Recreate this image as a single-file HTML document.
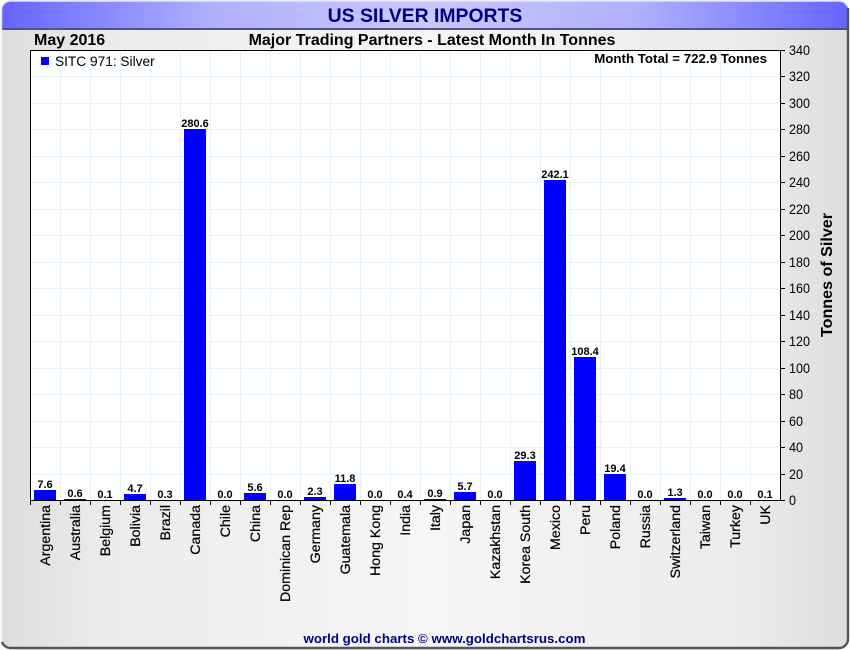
<!DOCTYPE html>
<html><head><meta charset="utf-8"><style>
html,body{margin:0;padding:0;background:#fff;width:850px;height:650px;overflow:hidden}
svg{display:block}
text{font-family:"Liberation Sans",sans-serif;fill:#000}
.v{font-size:11px;font-weight:bold;text-anchor:middle}
.y{font-size:14px}
.c{font-size:14.2px;text-anchor:end;stroke:#000;stroke-width:.22px}
</style></head><body>
<svg width="850" height="650" viewBox="0 0 850 650" xmlns="http://www.w3.org/2000/svg">
<defs>
<linearGradient id="bg" x1="0" x2="1" y1="0" y2="0"><stop offset="0" stop-color="#dddddd"/><stop offset=".12" stop-color="#ebebeb"/><stop offset=".5" stop-color="#f6f6f6"/><stop offset=".88" stop-color="#ebebeb"/><stop offset="1" stop-color="#dddddd"/></linearGradient>
<linearGradient id="tb" x1="0" x2="1" y1="0" y2="0"><stop offset="0" stop-color="#6464ff"/><stop offset=".25" stop-color="#b0b0ff"/><stop offset=".5" stop-color="#c8c8ff"/><stop offset=".75" stop-color="#b0b0ff"/><stop offset="1" stop-color="#6464ff"/></linearGradient>
<clipPath id="fr"><rect x="1" y="1" width="847" height="647" rx="9"/></clipPath>
</defs>
<rect x="1" y="1" width="847" height="647" rx="9" fill="url(#bg)"/>
<g clip-path="url(#fr)"><rect x="0" y="0" width="850" height="29" fill="url(#tb)"/><rect x="0" y="28" width="850" height="2" fill="#50508c"/></g>
<path d="M1.5 30V10A9 9 0 0 1 10.5 1H840A8 8 0 0 1 847 6" fill="none" stroke="#e4e4fa" stroke-width="1.5"/>
<path d="M1.5 30V640" fill="none" stroke="#f0f0f0" stroke-width="1.5"/>
<path d="M848 8V639A9 9 0 0 1 839 648H10A9 9 0 0 1 2 642" fill="none" stroke="#555" stroke-width="2.4"/>
<text x="425" y="22" font-size="19.4" font-weight="bold" text-anchor="middle" style="fill:#000080">US SILVER IMPORTS</text>
<text x="34" y="45" font-size="16" font-weight="bold">May 2016</text>
<text x="432" y="45" font-size="16" font-weight="bold" text-anchor="middle">Major Trading Partners - Latest Month In Tonnes</text>
<rect x="30.5" y="50.5" width="750" height="450" fill="#fff"/>
<path stroke="#e6f2fa" fill="none" d="M60.5 51V500M90.5 51V500M120.5 51V500M150.5 51V500M180.5 51V500M210.5 51V500M240.5 51V500M270.5 51V500M300.5 51V500M330.5 51V500M360.5 51V500M390.5 51V500M420.5 51V500M450.5 51V500M480.5 51V500M510.5 51V500M540.5 51V500M570.5 51V500M600.5 51V500M630.5 51V500M660.5 51V500M690.5 51V500M720.5 51V500M750.5 51V500M31 474.5H780M31 447.5H780M31 421.5H780M31 394.5H780M31 368.5H780M31 341.5H780M31 315.5H780M31 288.5H780M31 262.5H780M31 235.5H780M31 209.5H780M31 182.5H780M31 156.5H780M31 129.5H780M31 103.5H780M31 76.5H780"/>
<g fill="#0000ff">
<rect x="34" y="490" width="22" height="10"/>
<rect x="64" y="499" width="22" height="1"/>
<rect x="124" y="494" width="22" height="6"/>
<rect x="184" y="129" width="22" height="371"/>
<rect x="244" y="493" width="22" height="7"/>
<rect x="304" y="497" width="22" height="3"/>
<rect x="334" y="484" width="22" height="16"/>
<rect x="424" y="499" width="22" height="1"/>
<rect x="454" y="492" width="22" height="8"/>
<rect x="514" y="461" width="22" height="39"/>
<rect x="544" y="180" width="22" height="320"/>
<rect x="574" y="357" width="22" height="143"/>
<rect x="604" y="474" width="22" height="26"/>
<rect x="664" y="498" width="22" height="2"/>
<rect x="41" y="57" width="8" height="8"/>
</g>
<path stroke="#000" fill="none" d="M30.5 50.5H780.5V500.5H30.5ZM780 50.5H785M780 76.5H785M780 103.5H785M780 129.5H785M780 156.5H785M780 182.5H785M780 209.5H785M780 235.5H785M780 262.5H785M780 288.5H785M780 315.5H785M780 341.5H785M780 368.5H785M780 394.5H785M780 421.5H785M780 447.5H785M780 474.5H785M780 500.5H785M30.5 500V505M60.5 500V505M90.5 500V505M120.5 500V505M150.5 500V505M180.5 500V505M210.5 500V505M240.5 500V505M270.5 500V505M300.5 500V505M330.5 500V505M360.5 500V505M390.5 500V505M420.5 500V505M450.5 500V505M480.5 500V505M510.5 500V505M540.5 500V505M570.5 500V505M600.5 500V505M630.5 500V505M660.5 500V505M690.5 500V505M720.5 500V505M750.5 500V505"/>
<text x="55" y="66" font-size="13.7">SITC 971: Silver</text>
<text x="767" y="63" font-size="13.3" font-weight="bold" text-anchor="end">Month Total = 722.9 Tonnes</text>
<g class="y-labels">
<text class="y" x="789" y="55" textLength="21" lengthAdjust="spacingAndGlyphs">340</text><text class="y" x="789" y="81" textLength="21" lengthAdjust="spacingAndGlyphs">320</text><text class="y" x="789" y="108" textLength="21" lengthAdjust="spacingAndGlyphs">300</text><text class="y" x="789" y="134" textLength="21" lengthAdjust="spacingAndGlyphs">280</text><text class="y" x="789" y="161" textLength="21" lengthAdjust="spacingAndGlyphs">260</text><text class="y" x="789" y="187" textLength="21" lengthAdjust="spacingAndGlyphs">240</text><text class="y" x="789" y="214" textLength="21" lengthAdjust="spacingAndGlyphs">220</text><text class="y" x="789" y="240" textLength="21" lengthAdjust="spacingAndGlyphs">200</text><text class="y" x="789" y="267" textLength="21" lengthAdjust="spacingAndGlyphs">180</text><text class="y" x="789" y="293" textLength="21" lengthAdjust="spacingAndGlyphs">160</text><text class="y" x="789" y="320" textLength="21" lengthAdjust="spacingAndGlyphs">140</text><text class="y" x="789" y="346" textLength="21" lengthAdjust="spacingAndGlyphs">120</text><text class="y" x="789" y="373" textLength="21" lengthAdjust="spacingAndGlyphs">100</text><text class="y" x="789" y="399" textLength="14" lengthAdjust="spacingAndGlyphs">80</text><text class="y" x="789" y="426" textLength="14" lengthAdjust="spacingAndGlyphs">60</text><text class="y" x="789" y="452" textLength="14" lengthAdjust="spacingAndGlyphs">40</text><text class="y" x="789" y="479" textLength="14" lengthAdjust="spacingAndGlyphs">20</text><text class="y" x="789" y="505" textLength="7" lengthAdjust="spacingAndGlyphs">0</text>
</g>
<text class="v" x="45" y="488">7.6</text><text class="v" x="75" y="497">0.6</text><text class="v" x="105" y="498">0.1</text><text class="v" x="135" y="492">4.7</text><text class="v" x="165" y="498">0.3</text><text class="v" x="195" y="127">280.6</text><text class="v" x="225" y="498">0.0</text><text class="v" x="255" y="491">5.6</text><text class="v" x="285" y="498">0.0</text><text class="v" x="315" y="495">2.3</text><text class="v" x="345" y="482">11.8</text><text class="v" x="375" y="498">0.0</text><text class="v" x="405" y="498">0.4</text><text class="v" x="435" y="497">0.9</text><text class="v" x="465" y="490">5.7</text><text class="v" x="495" y="498">0.0</text><text class="v" x="525" y="459">29.3</text><text class="v" x="555" y="178">242.1</text><text class="v" x="585" y="355">108.4</text><text class="v" x="615" y="472">19.4</text><text class="v" x="645" y="498">0.0</text><text class="v" x="675" y="496">1.3</text><text class="v" x="705" y="498">0.0</text><text class="v" x="735" y="498">0.0</text><text class="v" x="765" y="498">0.1</text>
<text class="c" transform="translate(50 505) rotate(-90)">Argentina</text>
<text class="c" transform="translate(80 505) rotate(-90)">Australia</text>
<text class="c" transform="translate(110 505) rotate(-90)">Belgium</text>
<text class="c" transform="translate(140 505) rotate(-90)">Bolivia</text>
<text class="c" transform="translate(170 505) rotate(-90)">Brazil</text>
<text class="c" transform="translate(200 505) rotate(-90)">Canada</text>
<text class="c" transform="translate(230 505) rotate(-90)">Chile</text>
<text class="c" transform="translate(260 505) rotate(-90)">China</text>
<text class="c" transform="translate(290 505) rotate(-90)">Dominican Rep</text>
<text class="c" transform="translate(320 505) rotate(-90)">Germany</text>
<text class="c" transform="translate(350 505) rotate(-90)">Guatemala</text>
<text class="c" transform="translate(380 505) rotate(-90)">Hong Kong</text>
<text class="c" transform="translate(410 505) rotate(-90)">India</text>
<text class="c" transform="translate(440 505) rotate(-90)">Italy</text>
<text class="c" transform="translate(470 505) rotate(-90)">Japan</text>
<text class="c" transform="translate(500 505) rotate(-90)">Kazakhstan</text>
<text class="c" transform="translate(530 505) rotate(-90)">Korea South</text>
<text class="c" transform="translate(560 505) rotate(-90)">Mexico</text>
<text class="c" transform="translate(590 505) rotate(-90)">Peru</text>
<text class="c" transform="translate(620 505) rotate(-90)">Poland</text>
<text class="c" transform="translate(650 505) rotate(-90)">Russia</text>
<text class="c" transform="translate(680 505) rotate(-90)">Switzerland</text>
<text class="c" transform="translate(710 505) rotate(-90)">Taiwan</text>
<text class="c" transform="translate(740 505) rotate(-90)">Turkey</text>
<text class="c" transform="translate(770 505) rotate(-90)">UK</text>
<text transform="translate(832 275) rotate(-90)" font-size="16.1" font-weight="bold" text-anchor="middle">Tonnes of Silver</text>
<text x="444.5" y="643" font-size="13.3" font-weight="bold" text-anchor="middle" style="fill:#000080">world gold charts © www.goldchartsrus.com</text>
</svg>
</body></html>
